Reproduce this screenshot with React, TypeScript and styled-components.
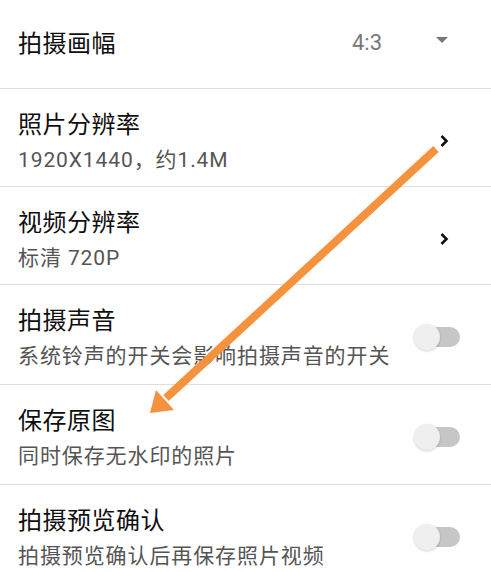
import React from "react";
import styled, { createGlobalStyle } from "styled-components";

const GlobalStyle = createGlobalStyle`
  html, body {
    margin: 0;
    padding: 0;
    background: #fff;
  }
  body {
    font-family: "Noto Sans CJK SC", "Noto Sans", sans-serif;
    overflow: hidden;
  }
`;

type Setting = {
  title: string;
  desc: string;
  kind: "chevron" | "toggle";
};

const settings: Setting[] = [
  { title: "照片分辨率", desc: "1920X1440，约1.4M", kind: "chevron" },
  { title: "视频分辨率", desc: "标清 720P", kind: "chevron" },
  { title: "拍摄声音", desc: "系统铃声的开关会影响拍摄声音的开关", kind: "toggle" },
  { title: "保存原图", desc: "同时保存无水印的照片", kind: "toggle" },
  { title: "拍摄预览确认", desc: "拍摄预览确认后再保存照片视频", kind: "toggle" },
];

export default function App() {
  return (
    <Page>
      <GlobalStyle />
      <List>
        <TopRow>
          <Title>拍摄画幅</Title>
          <Value>4:3</Value>
          <Dropdown>
            <svg width="12" height="6" viewBox="0 0 12 6">
              <path d="M0 0 L12 0 L6 6 Z" fill="#777" />
            </svg>
          </Dropdown>
        </TopRow>
        {settings.map((s) => (
          <Row key={s.title} $tall={s.kind === "toggle"}>
            <Texts>
              <Title>{s.title}</Title>
              <Desc>{s.desc}</Desc>
            </Texts>
            {s.kind === "chevron" ? (
              <Chevron>
                <svg width="10" height="14" viewBox="0 0 10 14">
                  <path
                    d="M2.5 2 L7.5 7 L2.5 12"
                    fill="none"
                    stroke="#111"
                    strokeWidth="2.6"
                  />
                </svg>
              </Chevron>
            ) : (
              <Toggle>
                <Track />
                <Thumb />
              </Toggle>
            )}
          </Row>
        ))}
      </List>
      <Overlay width="491" height="572" viewBox="0 0 491 572">
        <line
          x1="436"
          y1="149"
          x2="166"
          y2="398"
          stroke="#f5923e"
          strokeWidth="8"
          strokeLinecap="butt"
        />
        <path d="M150 413 L156 390 L174 410 Z" fill="#f5923e" />
      </Overlay>
    </Page>
  );
}

const Page = styled.div`
  position: relative;
  width: 491px;
  height: 572px;
  background: #fff;
  overflow: hidden;
`;

const List = styled.div`
  display: flex;
  flex-direction: column;
`;

const TopRow = styled.div`
  display: flex;
  align-items: center;
  height: 88px;
  padding: 0 0 2px 18px;
  box-sizing: content-box;
  border-bottom: 1px solid #dedede;
  margin-top: -2px;
`;

const Row = styled.div<{ $tall: boolean }>`
  display: flex;
  align-items: center;
  padding: 19px 0 ${(p) => (p.$tall ? 14 : 12)}px 18px;
  border-bottom: 1px solid #dedede;
`;

const Texts = styled.div`
  display: flex;
  flex-direction: column;
  flex: 1;
  gap: 8px;
`;

const Title = styled.div`
  flex: 1;
  font-size: 24px;
  line-height: 30px;
  letter-spacing: 0.5px;
  color: #0e0e0e;
`;

const Desc = styled.div`
  font-family: Roboto, "Noto Sans CJK SC", sans-serif;
  font-size: 21px;
  line-height: 28px;
  letter-spacing: 0.9px;
  color: #555;
`;

const Value = styled.div`
  font-family: Roboto, sans-serif;
  font-size: 22px;
  color: #777;
  margin-right: 54px;
`;

const Dropdown = styled.div`
  display: flex;
  width: 12px;
  margin-right: 43px;
  margin-top: -4px;
`;

const Chevron = styled.div`
  display: flex;
  margin-right: 42px;
  margin-top: 0;
`;

const Toggle = styled.div`
  position: relative;
  width: 46px;
  height: 26px;
  margin-right: 31px;
  margin-top: 0;
`;

const Track = styled.div`
  position: absolute;
  right: 0;
  top: 3px;
  width: 36px;
  height: 20px;
  border-radius: 10px;
  background: #c6c6c6;
`;

const Thumb = styled.div`
  position: absolute;
  left: 0;
  top: 0;
  width: 26px;
  height: 26px;
  border-radius: 50%;
  background: #efefef;
  box-shadow: 0 1px 3px rgba(0, 0, 0, 0.18);
`;

const Overlay = styled.svg`
  position: absolute;
  left: 0;
  top: 0;
  pointer-events: none;
`;
